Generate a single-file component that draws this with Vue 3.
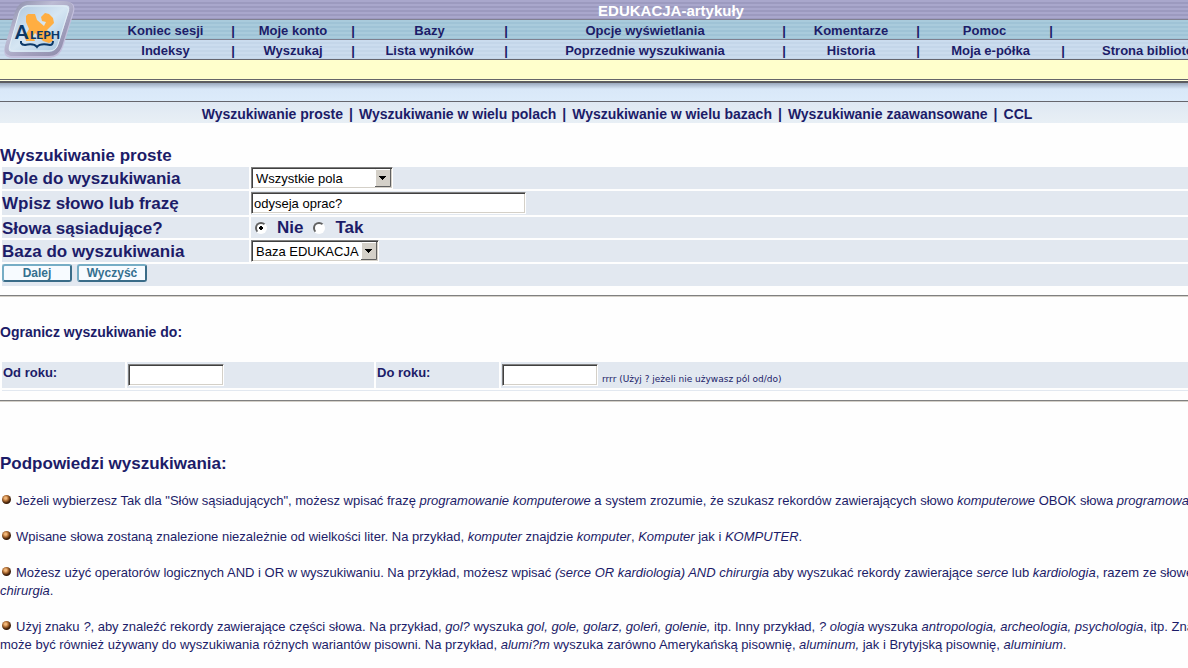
<script setup>
import { ref } from 'vue'

const topMenu = ['Koniec sesji', 'Moje konto', 'Bazy', 'Opcje wyświetlania', 'Komentarze', 'Pomoc']
const lowMenu = ['Indeksy', 'Wyszukaj', 'Lista wyników', 'Poprzednie wyszukiwania', 'Historia', 'Moja e-półka', 'Strona biblioteki']
const modes = ['Wyszukiwanie proste', 'Wyszukiwanie w wielu polach', 'Wyszukiwanie w wielu bazach', 'Wyszukiwanie zaawansowane', 'CCL']

const field = ref('Wszystkie pola')
const query = ref('odyseja oprac?')
const adjacent = ref('nie')
const base = ref('Baza EDUKACJA')
const yearFrom = ref('')
const yearTo = ref('')

function clearForm() {
  query.value = ''
  yearFrom.value = ''
  yearTo.value = ''
}
</script>

<template>
  <div class="page">
    <header>
      <svg class="logo" width="76" height="59" viewBox="0 0 76 59" role="img" aria-label="Aleph">
        <defs>
          <linearGradient id="rim" x1="0" y1="0" x2="1" y2="1">
            <stop offset="0" stop-color="#8587a4" />
            <stop offset="0.35" stop-color="#bdbcd4" />
            <stop offset="0.65" stop-color="#a3a0be" />
            <stop offset="1" stop-color="#8c8aa8" />
          </linearGradient>
          <linearGradient id="face" x1="0" y1="0" x2="1" y2="1">
            <stop offset="0" stop-color="#a9c3dc" />
            <stop offset="0.5" stop-color="#d6e6f3" />
            <stop offset="1" stop-color="#9fc0dc" />
          </linearGradient>
        </defs>
        <path d="M27 2H67Q76 2 74 12L63 47Q60 57 50 58H12Q2 57 5 48L16 12Q19 3 27 2Z" fill="#c3bfdc" />
        <path d="M27 3H64Q73 3 71 11L60 46Q57 54 49 54H13Q5 54 7 46L17 12Q20 4 27 3Z" fill="url(#face)" stroke="url(#rim)" stroke-width="4" />
        <path d="M27 6H63Q70 6 68 12L58 44Q56 51 49 51H14Q8 51 10 45L19 13Q21 7 27 6Z" fill="none" stroke="#e4edf6" />
        <path d="M26 16L28 14L35 14L37 20L44 26L46 22L42 21L41 17L45 13L49 14L53 18L54 23L47 30L50 33L53 41L49 43L43 41L35 33L33 36L35 41L26 41L25 36L29 29L26 22Z" fill="#ffae42" />
        <text x="15" y="39" class="logo-text" font-size="19">A</text>
        <text x="30" y="39" class="logo-text" font-size="12">LEPH</text>
        <path d="M21 41V43Q22 45 25 45Q34 43 37 47Q40 43 50 45Q53 45 53 41" fill="none" stroke="#0b3868" stroke-width="2" />
      </svg>
      <div class="bar title">EDUKACJA-artykuły</div>
      <nav class="bar menu top-menu" aria-label="Menu sesji">
        <span v-for="m in topMenu" :key="m" class="cell"><a href="#">{{ m }}</a><b>|</b></span>
      </nav>
      <nav class="bar menu low-menu" aria-label="Menu wyszukiwania">
        <span v-for="(m, i) in lowMenu" :key="m" class="cell"><a href="#">{{ m }}</a><b v-if="i < 6">|</b></span>
      </nav>
      <div class="message"></div>
      <div class="shade"></div>
      <nav class="modes" aria-label="Rodzaj wyszukiwania">
        <template v-for="(m, i) in modes" :key="m"><b v-if="i">|</b><a href="#">{{ m }}</a></template>
      </nav>
    </header>

    <main>
      <form @submit.prevent>
        <h1>Wyszukiwanie proste</h1>
        <div class="fields">
          <label for="field">Pole do wyszukiwania</label>
          <div>
            <span class="drop">
              <select id="field" v-model="field" class="wide"><option>Wszystkie pola</option></select>
              <svg class="arrow" width="16" height="18" viewBox="0 0 16 18"><path d="M0 0H16V18H0Z" fill="#d4d0c8" /><path d="M0.5 17V0.5H15" fill="none" stroke="#fff" /><path d="M0 17.5H15.5V0" fill="none" stroke="#606060" /><path d="M4 7H11V8H10V9H9V10H8V11H7V10H6V9H5V8H4Z" fill="#000" /></svg>
            </span>
          </div>
          <label for="query" class="tall">Wpisz słowo lub frazę</label>
          <div class="tall"><input id="query" v-model="query" class="box query" type="text"></div>
          <span id="adj" class="short">Słowa sąsiadujące?</span>
          <div class="short radios" role="radiogroup" aria-labelledby="adj">
            <input id="nie" v-model="adjacent" type="radio" value="nie"><label for="nie">Nie</label>
            <input id="tak" v-model="adjacent" type="radio" value="tak"><label for="tak">Tak</label>
          </div>
          <label for="base">Baza do wyszukiwania</label>
          <div>
            <span class="drop">
              <select id="base" v-model="base" class="narrow"><option>Baza EDUKACJA</option></select>
              <svg class="arrow" width="16" height="18" viewBox="0 0 16 18"><path d="M0 0H16V18H0Z" fill="#d4d0c8" /><path d="M0.5 17V0.5H15" fill="none" stroke="#fff" /><path d="M0 17.5H15.5V0" fill="none" stroke="#606060" /><path d="M4 7H11V8H10V9H9V10H8V11H7V10H6V9H5V8H4Z" fill="#000" /></svg>
            </span>
          </div>
          <div class="actions">
            <button type="submit">Dalej</button>
            <button type="button" @click="clearForm">Wyczyść</button>
          </div>
        </div>
        <hr>
        <h2>Ogranicz wyszukiwanie do:</h2>
        <div class="years">
          <label for="from">Od roku:</label>
          <div><input id="from" v-model="yearFrom" class="box" type="text"></div>
          <label for="to">Do roku:</label>
          <div><input id="to" v-model="yearTo" class="box" type="text"><small>rrrr (Użyj ? jeżeli nie używasz pól od/do)</small></div>
          <i class="strip"></i>
        </div>
        <hr>
      </form>

      <section class="hints">
        <h1>Podpowiedzi wyszukiwania:</h1>
        <p><i class="dot"></i>Jeżeli wybierzesz Tak dla "Słów sąsiadujących", możesz wpisać frazę <em>programowanie komputerowe</em> a system zrozumie, że szukasz rekordów zawierających słowo <em>komputerowe</em> OBOK słowa <em>programowanie</em>.</p>
        <p><i class="dot"></i>Wpisane słowa zostaną znalezione niezależnie od wielkości liter. Na przykład, <em>komputer</em> znajdzie <em>komputer</em>, <em>Komputer</em> jak i <em>KOMPUTER</em>.</p>
        <p><i class="dot"></i>Możesz użyć operatorów logicznych AND i OR w wyszukiwaniu. Na przykład, możesz wpisać <em>(serce OR kardiologia) AND chirurgia</em> aby wyszukać rekordy zawierające <em>serce</em> lub <em>kardiologia</em>, razem ze słowem<br><em>chirurgia</em>.</p>
        <p><i class="dot"></i>Użyj znaku <em>?</em>, aby znaleźć rekordy zawierające części słowa. Na przykład, <em>gol?</em> wyszuka <em>gol, gole, golarz, goleń, golenie,</em> itp. Inny przykład, <em>? ologia</em> wyszuka <em>antropologia, archeologia, psychologia</em>, itp. Znak<br>może być również używany do wyszukiwania różnych wariantów pisowni. Na przykład, <em>alumi?m</em> wyszuka zarówno Amerykańską pisownię, <em>aluminum,</em> jak i Brytyjską pisownię, <em>aluminium</em>.</p>
      </section>
    </main>
  </div>
</template>

<style>
body { overflow: hidden; background: #fefefe; }
</style>

<style scoped>
.page { position: relative; overflow: hidden; min-height: 100vh; color: #1c1c68; font-family: "Liberation Sans", Arial, sans-serif; font-size: 13px; }
.page * { box-sizing: border-box; }
a { color: inherit; text-decoration: none; }
.logo { position: absolute; left: 0; top: 0; z-index: 1; }
.logo-text { font-family: Lato, sans-serif; font-weight: 900; fill: #0b3868; }

.bar { height: 20px; border-bottom: 1px solid #808090; line-height: 21px; font-weight: bold; white-space: nowrap; }
.title { padding-left: 154px; text-align: center; color: #fff; font-size: 15px; background: repeating-linear-gradient(#a9a7cc 0 2px, #9c9abf 2px 4px); }
.menu { display: grid; padding-left: 100px; }
.top-menu { grid-template-columns: 135px 120px 153px 278px 134px 133px; background: repeating-linear-gradient(#a9cbdc 0 2px, #9fc3d6 2px 4px); }
.low-menu { grid-template-columns: 135px 120px 153px 278px 134px 145px 180px; background: repeating-linear-gradient(#cbdcee 0 2px, #c4d6e9 2px 4px); border-color: #66666e; }
.cell { position: relative; padding-right: 4px; text-align: center; }
.cell b { position: absolute; right: 0; top: 0; }
.message { height: 20px; border-bottom: 1px solid #66666a; background: #ffffcc; }
.shade { height: 22px; border-bottom: 1px solid #66666e; background: linear-gradient(#ffffe0 0 1px, #5c5c60 1px 3px, #9aa8bd 3px, #d9e8f8 9px, #dcebfa); }
.modes { display: flex; gap: 6px; justify-content: center; padding-left: 46px; height: 21px; line-height: 25px; font-size: 14px; font-weight: bold; background: linear-gradient(#dfe8f3, #e8eff5); }

h1 { margin: 0; font-size: 17px; line-height: 20px; }
h2 { margin: 26px 0 21px; font-size: 14px; line-height: 18px; }
form > h1 { margin-top: 23px; }
.fields { display: grid; grid-template-columns: 247px 1fr; gap: 2px; padding-left: 2px; margin-top: 1px; }
.fields > * { height: 22px; line-height: 23px; background: #e2e8f0; font-size: 17px; font-weight: bold; }
.fields > .tall { height: 24px; line-height: 25px; }
.fields > .short { height: 21px; }
.fields > .actions { grid-column: 1 / -1; display: flex; gap: 5px; align-items: flex-start; }
.drop { position: relative; display: inline-flex; vertical-align: top; }
select, .box { appearance: none; height: 22px; margin: 0; border: 1px solid; border-color: #808080 #fff #fff #808080; border-radius: 0; outline: 0; background: #fff; box-shadow: inset 1px 1px #404040, inset -1px -1px #d4d0c8; color: #000; font: 13px "Liberation Sans", Arial, sans-serif; }
select { padding: 0 18px 0 4px; }
.wide { width: 142px; }
.narrow { width: 128px; }
.arrow { position: absolute; right: 2px; top: 2px; pointer-events: none; }
.box { display: block; width: 96px; padding: 0 2px; }
.query { width: 275px; margin-top: 1px; }
.radios { display: flex; align-items: center; padding-left: 4px; }
.radios label { margin: 0 10px; }
.radios input { appearance: none; width: 12px; height: 12px; margin: 0; border: 2px solid; border-color: #606060 #fff #fff #606060; border-radius: 50%; background: #fff; }
.radios input:checked { background: radial-gradient(circle, #000 0 2px, #fff 2px); }
button { width: 70px; height: 18px; padding: 0; border: 2px solid; border-color: #76adc5 #3a6c88 #3a6c88 #76adc5; border-radius: 3px; background: #f7fbff; color: #35708f; font: bold 12px/13px "Liberation Sans", Arial, sans-serif; }
hr { height: 2px; margin: 9px 0 0; border: 0; border-top: 1px solid #808080; background: #d4d0c8; }
.years { display: grid; grid-template-columns: 123px 247px 123px 1fr; gap: 2px; padding-left: 2px; }
.years > * { height: 26px; padding-left: 1px; background: #e2e8f0; }
.years label { line-height: 22px; font-weight: bold; font-size: 13px; }
.years div { display: flex; align-items: center; gap: 4px; }
.years small { align-self: flex-end; font: 9px/17px "DejaVu Sans", Verdana, sans-serif; }
.years .strip { grid-column: 1 / -1; height: 1px; }

.hints { padding-top: 52px; white-space: nowrap; }
.hints h1 { margin-bottom: 18px; }
p { margin: 0 0 18px; line-height: 18px; }
.dot { display: inline-block; width: 9px; height: 9px; margin: 0 5px 1px 2px; border-radius: 50%; background: radial-gradient(circle at 40% 35%, #f3b87a 0 1px, #a5642c 3px, #3a1c08 5px); }
</style>
